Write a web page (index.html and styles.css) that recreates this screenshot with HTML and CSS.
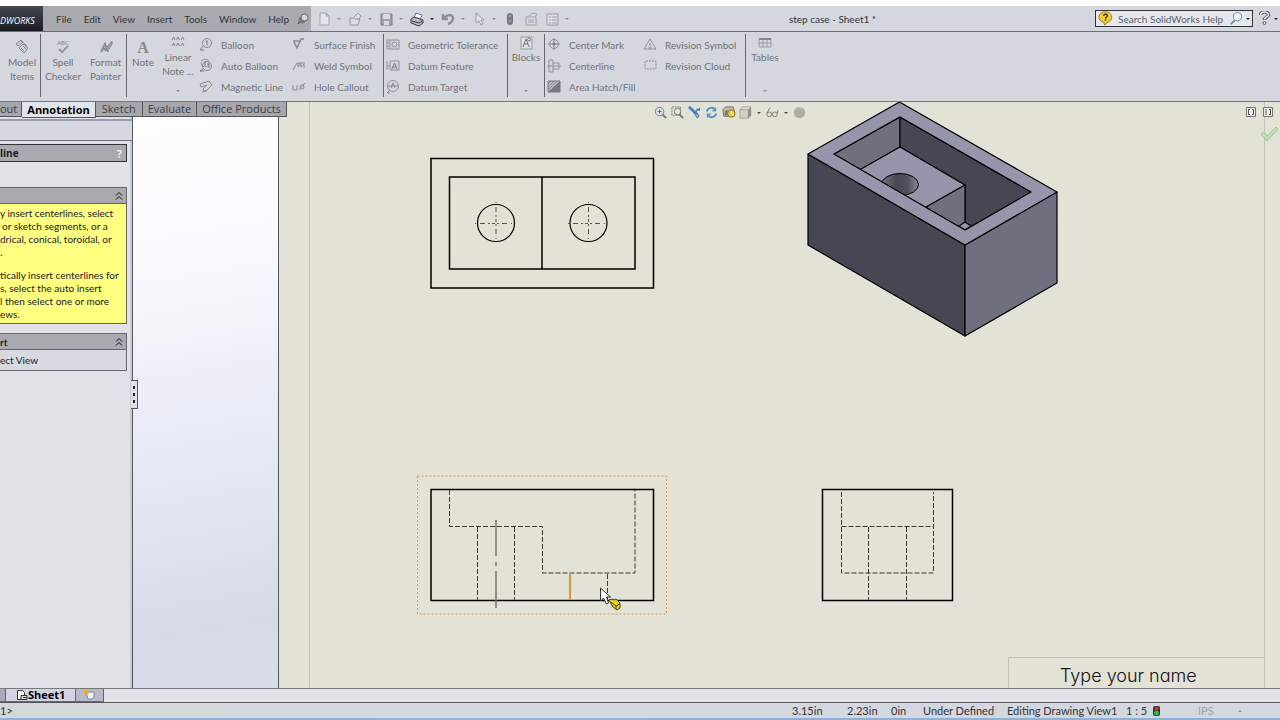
FILE: index.html
```
<!DOCTYPE html>
<html lang="en">
<head>
    <meta charset="UTF-8">
    <meta name="viewport" content="width=device-width, initial-scale=1.0">
    <title>step case - Sheet1</title>
    <link rel="stylesheet" href="styles.css">
</head>
<body>
    <header class="menubar">
        <div class="logo">DWORKS</div>
        <nav class="menus">
            <button>File</button>
            <button>Edit</button>
            <button>View</button>
            <button>Insert</button>
            <button>Tools</button>
            <button>Window</button>
            <button>Help</button>
            <button aria-label="Pin menu"><svg class="icon-pin" viewBox="0 0 12 12"><path d="M1 11l4-5" stroke="#555" stroke-width="1.5"/><circle cx="5" cy="7" r="3.5" fill="#77797e"/><circle cx="7.500" cy="4.500" r="3.500" fill="#d8d9dc" stroke="#66686d"/></svg></button>
        </nav>
        <div class="quick">
            <button class="drop" aria-label="New"><svg viewBox="0 0 16 16"><path d="M4 2h6l3 3v9H4zM10 2v3h3" fill="#e4e6ea" stroke="#a0a2a7"/></svg><i></i></button>
            <button class="drop" aria-label="Open"><svg viewBox="0 0 16 16"><path d="M3 7h4l1 1h5l-2 6H3zM7 6l4-4 3 3-3 4" fill="#dadce0" stroke="#999ba0"/></svg><i></i></button>
            <button class="drop" aria-label="Save"><svg viewBox="0 0 16 16"><path d="M3 3h11v11H3z" fill="#a0a1a5" stroke="#7b7c80"/><path d="M5 3h7v5H5zM6 10h5v4H6z" fill="#d8dade"/></svg><i></i></button>
            <button class="drop on" aria-label="Print"><svg viewBox="0 0 16 16"><path d="M5 7l2-5 6 2-2 5z" fill="#fff" stroke="#4977b5"/><path d="M2 8l3-2 9 3v3l-4 3-8-3z" fill="#b9bbbd" stroke="#35373b"/><path d="M3 10l7 2 3-2" fill="none" stroke="#333"/></svg><i></i></button>
            <button class="drop" aria-label="Undo"><svg viewBox="0 0 16 16"><path d="M3 3v5h5M4 8c2-5 9-5 9-1 0 3-2 5-5 6" fill="none" stroke="#8c8e93" stroke-width="2.500"/></svg><i></i></button>
            <button class="drop" aria-label="Select"><svg viewBox="0 0 16 16"><path d="M5 2v10l3-2 2 4 2-1-2-4h3z" fill="#e0e2e6" stroke="#9a9ca1"/></svg><i></i></button>
            <button aria-label="Rebuild"><svg viewBox="0 0 16 16"><rect x="5" y="2" width="6" height="12" rx="3" fill="#77797d"/><circle cx="8" cy="5" r="1.5" fill="#999"/><circle cx="8" cy="10" r="1.5" fill="#999"/></svg></button>
            <button aria-label="File properties"><svg viewBox="0 0 16 16"><path d="M3 6h10v8H3zM5 9h6M5 11h6M6 5l4-3 4 1-2 3" fill="#d9dbdf" stroke="#a0a2a6"/></svg></button>
            <button class="drop" aria-label="Options"><svg viewBox="0 0 16 16"><path d="M3 3h11v11H3zM5 6h2M8 6h5M5 9h2M8 9h5M5 12h2M8 12h5" fill="#dfe1e5" stroke="#97999e"/></svg><i></i></button>
        </div>
        <div class="doc-title">step case - Sheet1 *</div>
        <div class="search">
            <svg viewBox="0 0 16 16"><path d="M8 1a6 5.500 0 0 1 3 10.500L7 15l-1-3A6 5.500 0 0 1 8 1z" fill="#f3c93c" stroke="#a47c18"/><path d="M6 5c0-2 4-2 4 0 0 1.500-2 1.500-2 3M8 9v1.500" fill="none" stroke="#4b3508" stroke-width="1.500"/></svg>
            <input type="text" aria-label="Search help" placeholder="Search SolidWorks Help">
            <button class="drop on" aria-label="Search"><svg viewBox="0 0 16 16"><circle cx="9" cy="6" r="4.500" fill="#e9f2fb" stroke="#6d83a5"/><path d="M6 10l-4 4" stroke="#7d8494" stroke-width="2"/></svg><i></i></button>
        </div>
        <button class="help drop on" aria-label="Help"><svg viewBox="0 0 16 16"><path d="M4.500 4c0-4 8-4 8 0 0 2-4 2-4 5" fill="none" stroke="#5c5e63" stroke-width="3.500"/><circle cx="8.500" cy="12" r="1.500" fill="#eee" stroke="#5c5e63"/><path d="M4.500 4.500c0-4.500 8-4.500 8-.5 0 2-4 2-4 4.500" fill="none" stroke="#eee" stroke-width="1.500"/></svg><i></i></button>
    </header>

    <section class="ribbon">
        <button class="big split first"><svg viewBox="0 0 16 16"><path d="M2 5l5-4 2 2-5 4zM7 2l6 5M5 9l4-4 5 4-4 5zM7 9l3 3M9 7l3 3" fill="none" stroke="#85878c"/></svg><span>Model Items</span></button>
        <button class="big"><svg viewBox="0 0 16 16"><text x="8" y="6" class="abc">ABC</text><path d="M4 10l3 3 6-6" fill="none" stroke="#999ba0" stroke-width="2"/></svg><span>Spell Checker</span></button>
        <button class="big split"><svg viewBox="0 0 16 16"><path d="M3 13l4-8 3 8M4 10h5" fill="none" stroke="#8a8c91" stroke-width="2"/><path d="M14 2l-5 6-2 4 4-2 3-5z" fill="#a6a8ad" stroke="#85878c"/></svg><span>Format Painter</span></button>
        <button class="big"><svg viewBox="0 0 16 16"><text x="8" y="14" class="letter">A</text></svg><span>Note</span></button>
        <button class="big tight"><svg viewBox="0 0 16 16"><path d="M2 6l1.500-3L5 6M6.500 6L8 3l1.500 3M11 6l1.500-3L14 6M2 12l1.500-3L5 12M6.500 12L8 9l1.500 3M11 12l1.500-3L14 12" fill="none" stroke="#85878c"/></svg><span>Linear Note ...</span><i></i></button>
        <div class="stack">
            <button><svg viewBox="0 0 16 16"><circle cx="9" cy="6" r="4.500" fill="none" stroke="#888a8f"/><path d="M9 3.500v5M7.500 5L9 3.500M5 9l-3 4h4" fill="none" stroke="#777"/></svg>Balloon</button>
            <button><svg viewBox="0 0 16 16"><circle cx="7" cy="5" r="4" fill="none" stroke="#9a9ca1"/><circle cx="9" cy="8" r="4.500" fill="none" stroke="#888a8f"/><path d="M7 3v5M9 6h2v4M5 11l-3 2h4" fill="none" stroke="#777"/></svg>Auto Balloon</button>
            <button><svg viewBox="0 0 16 16"><path d="M2 5l9-3 3 4-7 7-2-3 4-4-6 2zM9 11l-5 2" fill="none" stroke="#8a8c91"/></svg>Magnetic Line</button>
        </div>
        <div class="stack split">
            <button><svg viewBox="0 0 16 16"><path d="M2 4h7M3 5l3 6 4-9h3" fill="none" stroke="#888a8f" stroke-width="1.500"/></svg>Surface Finish</button>
            <button><svg viewBox="0 0 16 16"><path d="M2 12l4-7h8M7 5v4l3-4v4l3-3v4" fill="none" stroke="#888a8f"/></svg>Weld Symbol</button>
            <button><svg viewBox="0 0 16 16"><path d="M2 6v5h4V6M8 11l6-7" fill="none" stroke="#888a8f"/><circle cx="11" cy="8" r="2" fill="none" stroke="#888a8f"/></svg>Hole Callout</button>
        </div>
        <div class="stack split">
            <button><svg viewBox="0 0 16 16"><path d="M2 3h12v9H2zM5 3v9M2 6h3M2 9h3" fill="none" stroke="#909297"/><circle cx="9.500" cy="7.500" r="2.500" fill="none" stroke="#85878c"/></svg>Geometric Tolerance</button>
            <button><svg viewBox="0 0 16 16"><path d="M5 3h9v9H5zM2 3v9M2 8h3" fill="none" stroke="#909297"/><path d="M7 11l2.500-6L12 11M8 9h3" fill="none" stroke="#777"/></svg>Datum Feature</button>
            <button><svg viewBox="0 0 16 16"><circle cx="8" cy="7" r="5.500" fill="none" stroke="#909297"/><path d="M3 7h10M6 9l2-5 2 5M5 11l-3 3h3" fill="none" stroke="#85878c"/></svg>Datum Target</button>
        </div>
        <button class="big split tight"><svg viewBox="0 0 16 16"><path d="M3 3h11v12H3z" fill="#dfe1e5" stroke="#999ba0"/><path d="M5 13l3-8 3 8M6 10h4" fill="none" stroke="#777"/><circle cx="11" cy="5.500" r="1.500" fill="none" stroke="#777"/></svg><span>Blocks</span><i></i></button>
        <div class="stack">
            <button><svg viewBox="0 0 16 16"><circle cx="8" cy="7" r="4.500" fill="none" stroke="#888a8f"/><path d="M8 1v12M2 7h12" stroke="#888a8f"/><circle cx="8" cy="7" r="1.500" fill="#777"/></svg>Center Mark</button>
            <button><svg viewBox="0 0 16 16"><path d="M3 2h4v12H3zM7 5h6v6H7M1 8h14" fill="none" stroke="#909297"/></svg>Centerline</button>
            <button><svg viewBox="0 0 16 16"><path d="M2 2h12v11H2z" fill="#bbbdc2" stroke="#77797e"/><path d="M14 2v11H2z" fill="#77797e"/><path d="M2 8l6-6M2 11l9-9M2 5l3-3" stroke="#85878c"/></svg>Area Hatch/Fill</button>
        </div>
        <div class="stack split">
            <button><svg viewBox="0 0 16 16"><path d="M8 2l6 10H2zM8 6v5M7 7h1M6.500 11h3" fill="none" stroke="#909297"/></svg>Revision Symbol</button>
            <button><svg viewBox="0 0 16 16"><rect x="3" y="3" width="11" height="8" rx="1" fill="none" stroke="#85878c" stroke-dasharray="2 1"/></svg>Revision Cloud</button>
        </div>
        <button class="big tight"><svg viewBox="0 0 16 16"><path d="M2 5h12v8H2zM2 9h12M6 5v8M10 5v8" fill="none" stroke="#999ba0"/><path d="M2 5h12" stroke="#85878c" stroke-width="2"/></svg><span>Tables</span><i></i></button>
    </section>

    <main class="workspace">
        <nav class="tabs">
            <button>out</button>
            <button class="active">Annotation</button>
            <button>Sketch</button>
            <button>Evaluate</button>
            <button>Office Products</button>
        </nav>

        <aside class="manager">
            <div class="manager-top"></div>
            <h2 class="manager-title">line <span>?</span></h2>
            <section class="panel">
                <button class="panel-head" aria-label="Collapse message"><span></span><svg viewBox="0 0 8 10"><path d="M1 4.500l3-3 3 3M1 8.500l3-3 3 3" fill="none" stroke="#111"/></svg></button>
                <div class="message">
                    <p>y insert centerlines, select<br><span class="in">or sketch segments, or a</span><br>drical, conical, toroidal, or<br>.</p>
                    <p>tically insert centerlines for<br>s, select the auto insert<br>l then select one or more<br>ews.</p>
                </div>
            </section>
            <section class="panel">
                <button class="panel-head"><span>rt</span><svg viewBox="0 0 8 10"><path d="M1 4.500l3-3 3 3M1 8.500l3-3 3 3" fill="none" stroke="#111"/></svg></button>
                <div class="panel-row">ect View</div>
            </section>
            <button class="handle" aria-label="Hide panel"><b></b><b></b><b></b></button>
        </aside>

        <div class="backdrop"></div>

        <div class="sheet">
            <svg class="drawing" viewBox="279 102 1001 586" preserveAspectRatio="xMinYMin slice">
                <defs>
                    <linearGradient id="hole">
                        <stop offset="0" stop-color="#77788a"/>
                        <stop offset="0.4" stop-color="#464750"/>
                        <stop offset="0.7" stop-color="#50515c"/>
                        <stop offset="1" stop-color="#8a8b9d"/>
                    </linearGradient>
                    <clipPath id="pocket"><path d="M900 117l131 75-66 38-131-76z"/></clipPath>
                </defs>

                <!-- sheet border and title block -->
                <path class="frame" d="M309.500 102v586M1264.500 102v586M1008.500 688v-30.500h256"/>
                <text class="name" x="1060" y="682">Type your name</text>

                <!-- top view -->
                <path class="edge" d="M431 158.500h222.500v129.500H431zM449.500 177h185.500v92H449.500zM542 177v92"/>
                <circle class="edge thin" cx="496" cy="223" r="18.500"/>
                <circle class="edge thin" cx="588.500" cy="223" r="18.500"/>
                <path class="mark" d="M475 223.500h41M496 202v41M568 223.500h41M588.500 202v41"/>

                <!-- front view -->
                <rect class="selected" x="417.500" y="476" width="249" height="138"/>
                <path class="edge" d="M431 489.500h222.500v111H431z"/>
                <path class="hidden" d="M449.500 490v36.500h93V573h92.500v-83M477.500 527v73M514.500 527v73M607.500 574v26"/>
                <path class="axis" d="M496 520v36M496 562v4M496 571v37"/>
                <path class="picked" d="M570 573v27"/>

                <!-- side view -->
                <path class="edge" d="M822.500 489.500h130v111h-130z"/>
                <path class="hidden" d="M841.500 492v81h92v-81M841.500 526.500h92M868.500 527v73M906.500 527v73"/>

                <!-- isometric view -->
                <path class="solid dark" d="M808 154l157 91v91l-157-91z"/>
                <path class="solid mid" d="M965 245l92-53v91l-92 53z"/>
                <path class="solid light" d="M899.500 102L1057 192l-92 53-157-91z"/>
                <g clip-path="url(#pocket)">
                    <path class="solid mid" d="M900 117v30l-66 38v-31z"/>
                    <path class="solid dark" d="M900 117l131 75-66 45v-52l-65-38z"/>
                    <path class="solid light" d="M900 147l65 38-66 38-66-38z"/>
                    <ellipse cx="900" cy="184.500" rx="18.500" ry="11" fill="url(#hole)" stroke="#000"/>
                    <path class="solid mid" d="M965 185v52l-39-30z"/>
                    <path class="solid light" d="M965 222l6 4-6 4-6-4z"/>
                </g>
                <path class="edge thin" d="M900 117l131 75-66 38-131-76z"/>

                <!-- pointer -->
                <path d="M600.500 588v13l3-3 3 6 2-1-2-6h4z" fill="#fff" stroke="#333"/>
                <path d="M609 600l3-1 2 1 2-1 4 4v5l-3 2-4-3z" fill="#e8d02c" stroke="#4c430c"/>
                <path d="M611 602l5 4 4-2M616 606v3" fill="none" stroke="#4c430c"/>
            </svg>

            <div class="view-tools">
                <button aria-label="Zoom to fit"><svg viewBox="0 0 16 16"><circle cx="7" cy="7" r="4.500" fill="#dbe3ea" stroke="#777"/><path d="M5 7h4M7 5v4" stroke="#555"/><path d="M10 10l4 4" stroke="#777" stroke-width="2"/></svg></button>
                <button aria-label="Zoom to area"><svg viewBox="0 0 16 16"><path d="M2 2h9v9H2z" fill="none" stroke="#777" stroke-dasharray="2 1"/><circle cx="8" cy="7" r="3.500" fill="#dbe3ea" stroke="#777"/><path d="M10 10l4 4" stroke="#777" stroke-width="2"/></svg></button>
                <button aria-label="Previous view"><svg viewBox="0 0 16 16"><path d="M2 2l9 8" stroke="#4b87bd" stroke-width="3"/><path d="M14 3l-5 5M7 8l4 6 2-3z" stroke="#3c76ad" fill="#8ec1e6"/><path d="M10 5h4" stroke="#3c76ad" stroke-width="2"/></svg></button>
                <button aria-label="Rebuild view"><svg viewBox="0 0 16 16"><path d="M3 7c1-5 7-5 9-2M13 9c-1 5-7 5-9 2" fill="none" stroke="#5b94c8" stroke-width="2"/><path d="M13 2v5H8zM3 14V9h5z" fill="#5b94c8"/></svg></button>
                <button aria-label="3D drawing view"><svg viewBox="0 0 16 16"><path d="M2 5l3-3h8l1 4v6H3z" fill="#b9bbb5" stroke="#6e6f6b"/><path d="M4 6h4v5H4z" fill="#777"/><circle cx="11" cy="9" r="4" fill="#f0c53a" stroke="#8d701b"/><path d="M11 6v3l3 2" fill="none" stroke="#fff"/></svg></button>
                <button aria-label="Display style"><svg viewBox="0 0 16 16"><path d="M2 5l3-3h9l-3 3z" fill="#e0e0d8" stroke="#a4a49c"/><path d="M2 5h9v9H2z" fill="#cfcfc7" stroke="#a4a49c"/><path d="M11 5l3-3v9l-3 3z" fill="#8d8d86"/></svg></button>
                <i></i>
                <button aria-label="Hide items"><svg viewBox="0 0 16 16"><circle cx="4.500" cy="10" r="2.500" fill="none" stroke="#777"/><circle cx="10.500" cy="10" r="2.500" fill="none" stroke="#777"/><path d="M2 9l3-6M13 9l1-4M7 9h1" fill="none" stroke="#777"/></svg></button>
                <i></i>
                <button aria-label="Appearance"><svg viewBox="0 0 16 16"><circle cx="8" cy="8" r="6" fill="#aeada3"/><path d="M4 6a4 4 0 0 1 6-2" fill="none" stroke="#c3c2b8"/></svg></button>
            </div>
            <div class="corner">
                <div>
                    <button aria-label="Previous pane"><svg viewBox="0 0 12 12"><path d="M1.500 1.500h9v9h-9z" fill="#eee" stroke="#77776f"/><path d="M5 3.500H3.500v5H5M7 3.500h1.500v5H7" fill="none" stroke="#555"/></svg></button>
                    <button aria-label="Next pane"><svg viewBox="0 0 12 12"><path d="M1.500 1.500h9v9h-9z" fill="#eee" stroke="#77776f"/><path d="M7 3.500h1.500v5H7M4 3v6" fill="none" stroke="#555"/></svg></button>
                </div>
                <button aria-label="Confirm"><svg class="check" viewBox="0 0 18 16"><path d="M1 8l3-2 3 4 9-9 2 2L7 15z" fill="#c2dfb5" stroke="#a3c796"/></svg></button>
            </div>
        </div>
    </main>

    <nav class="sheet-tabs">
        <button class="edge-tab" aria-label="Previous sheet"></button>
        <button class="current"><svg viewBox="0 0 12 12"><path d="M1.500 1.500h5l2 2v7h-7z" fill="#fff" stroke="#333"/><path d="M5 6.500h6v4H5zM7 8.500h4" fill="#ddd" stroke="#333"/></svg>Sheet1</button>
        <button class="add" aria-label="Add sheet"><svg viewBox="0 0 12 12"><path d="M3 3h8v5l-2 2H5z" fill="#eef1f6" stroke="#7f8796"/><circle cx="3" cy="3" r="2.500" fill="#f2a62d"/></svg></button>
    </nav>

    <footer class="status">
        <span class="hint">1&gt;</span>
        <span class="x">3.15in</span>
        <span class="y">2.23in</span>
        <span class="z">0in</span>
        <span class="state">Under Defined</span>
        <span class="mode">Editing Drawing View1</span>
        <span class="scale">1 : 5</span>
        <svg viewBox="0 0 8 12"><rect x="0" y="1" width="7" height="10" rx="2" fill="#333"/><circle cx="3.500" cy="3.500" r="2" fill="#d5301f"/><circle cx="3.500" cy="8" r="2.500" fill="#2fbd3b"/></svg>
        <button class="units">IPS<i></i></button>
    </footer>
</body>
</html>
```
FILE: styles.css
```
* {
    box-sizing: border-box;
}
body {
    margin: 0;
    height: 100vh;
    display: flex;
    flex-direction: column;
    overflow: hidden;
    border-top: 6px solid #fff;
    background: #d4d7dd;
    color: #333438;
    font-family: Lato, "Open Sans", sans-serif;
    font-size: 10px;
    line-height: 14px;
}
button, input {
    margin: 0;
    padding: 0;
    border: 0;
    background: none;
    color: inherit;
    font: inherit;
}
svg {
    display: block;
    flex: none;
    width: 16px;
    height: 16px;
}
/* small drop-down arrow */
i {
    width: 0;
    height: 0;
    border: 2px solid transparent;
    border-top-color: #8d8f94;
    border-bottom: 0;
}

/* menu bar */
.menubar {
    flex: none;
    display: flex;
    align-items: center;
    height: 26px;
    border-bottom: 1px solid #6d6e73;
}
.logo {
    width: 43px;
    height: 25px;
    padding-top: 8px;
    background: linear-gradient(#434750, #191c22);
    color: #fff;
    font-family: "Open Sans", sans-serif;
    font-size: 9px;
    font-style: italic;
    white-space: nowrap;
}
.menus {
    display: flex;
    align-items: center;
    gap: 12px;
    width: 268px;
    height: 25px;
    padding-left: 13px;
    background: #a9aaaf;
    white-space: nowrap;
}
.icon-pin {
    width: 12px;
    height: 12px;
}
.menus button:last-child {
    margin-left: -4px;
}
.quick {
    display: flex;
    align-items: center;
    gap: 5px;
    padding-left: 5px;
}
.drop {
    display: flex;
    align-items: center;
    gap: 5px;
}
.quick .drop {
    width: 26px;
}
.on i {
    border-top-color: #222;
}
.doc-title {
    flex: 1;
    text-align: center;
}
.search {
    display: flex;
    align-items: center;
    gap: 5px;
    width: 158px;
    height: 17px;
    padding: 0 2px;
    border: 1px solid #333;
    background: #e4e7ee;
}
.search svg {
    width: 15px;
    height: 15px;
}
.search input {
    flex: 1;
    min-width: 0;
    outline: 0;
}
.search input::placeholder {
    color: #5c5e66;
    opacity: 1;
}
.search .drop {
    gap: 2px;
    margin-left: -4px;
}
.help {
    width: 27px;
    padding-left: 3px;
    gap: 2px;
}

/* ribbon */
.ribbon {
    flex: none;
    display: grid;
    grid-template-columns: 41px 44px 42px 32px 38px 93px 94px 124px 37px 96px 105px 38px;
    height: 70px;
    padding: 2px 0 4px;
    border-bottom: 1px solid #77787a;
    background: #d4d7dd;
    color: #707278;
}
.split {
    border-right: 1px solid #66686d;
}
.big {
    display: flex;
    flex-direction: column;
    align-items: center;
    gap: 0;
    padding-top: 5px;
}
.big.first {
    padding-left: 4px;
}
.big.tight {
    padding-top: 0;
}
.big i {
    margin: auto 0 5px;
}
.abc {
    font-size: 6px;
    text-anchor: middle;
    fill: #85878c;
}
.letter {
    font: bold 16px "Liberation Serif", serif;
    text-anchor: middle;
    fill: #85878c;
}
.stack {
    display: grid;
    grid-template-rows: repeat(3, 1fr);
    padding-left: 1px;
}
.stack button {
    display: flex;
    align-items: center;
    gap: 7px;
    white-space: nowrap;
}

/* workspace */
.workspace {
    position: relative;
    flex: 1;
    display: flex;
    min-height: 0;
}
.tabs {
    position: absolute;
    top: 0;
    left: 0;
    z-index: 2;
    display: flex;
    align-items: flex-start;
}
.tabs button {
    height: 15px;
    padding: 0 5px;
    border: solid #55565b;
    border-width: 0 1px 1px 0;
    background: #a6a7ac;
    color: #3d3e43;
    font-family: "Open Sans", sans-serif;
    font-size: 11px;
    line-height: 14px;
}
.tabs button:first-child {
    padding: 0 4px 0 0;
}
.tabs .active {
    height: 16px;
    background: #e2e4ea;
    color: #000;
    font-weight: bold;
}
.tabs .active + button {
    padding: 0 6px;
}
.manager {
    position: relative;
    flex: none;
    display: flex;
    flex-direction: column;
    width: 133px;
    padding: 17px 5px 0 0;
    border-right: 1px solid #55565b;
    background: #dfe2e7;
    box-shadow: inset -2px 0 #c9ccd2;
    color: #222;
}
.manager-top {
    height: 22px;
    margin-right: -5px;
    border-top: 2px solid #9c9bae;
    border-bottom: 1px solid #6d6e73;
    background: #d4d7dd;
}
.manager-title {
    display: flex;
    justify-content: space-between;
    height: 18px;
    margin: 3px 0 25px;
    padding-right: 4px;
    border: solid #333;
    border-width: 1px 1px 1px 0;
    background: #a9aaaf;
    font-family: "Open Sans", sans-serif;
    font-size: 10px;
    line-height: 17px;
}
.manager-title span {
    color: #eee;
    font-size: 11px;
}
.panel {
    margin-bottom: 9px;
    border: solid #66676c;
    border-width: 1px 1px 1px 0;
}
.panel-head {
    display: flex;
    align-items: center;
    justify-content: space-between;
    width: 100%;
    height: 16px;
    padding-right: 3px;
    border-bottom: 1px solid #66676c;
    background: #a9aaaf;
    font-weight: bold;
}
.panel-head svg {
    width: 8px;
    height: 10px;
}
.message {
    padding: 3px 0 2px;
    background: #ffff80;
    line-height: 13px;
    white-space: nowrap;
}
.message p {
    margin: 0;
}
.message p + p {
    margin-top: 10px;
}
.in {
    padding-left: 2px;
}
.panel-row {
    height: 20px;
    background: #d7dae0;
    line-height: 20px;
}
.handle {
    position: absolute;
    top: 278px;
    right: -6px;
    z-index: 1;
    display: flex;
    flex-direction: column;
    align-items: center;
    justify-content: center;
    gap: 4px;
    width: 7px;
    height: 29px;
    border: 1px solid #55565b;
    border-left: 0;
    background: #dfe2e7;
}
.handle b {
    width: 2px;
    height: 3px;
    background: #222;
}
.backdrop {
    flex: none;
    width: 145px;
    background: linear-gradient(170deg, #fdfdfd 0%, #fbfbfd 25%, #eceff8 48%, #dfe4ef 72%, #d6dae7 88%, #d9dce9 100%);
}
.sheet {
    position: relative;
    flex: 1;
    min-width: 0;
    border-left: 1px solid #55565b;
    background: #e2e2d7;
}
.drawing {
    width: 100%;
    height: 100%;
}
.frame {
    fill: none;
    stroke: #c2c3b8;
}
.name {
    font-family: Inter, sans-serif;
    font-size: 18px;
    font-weight: 300;
    font-feature-settings: "cv11";
    fill: #111;
}
.edge {
    fill: none;
    stroke: #000;
    stroke-width: 1.5;
}
.thin {
    stroke-width: 1.2;
}
.mark {
    fill: none;
    stroke: #55554f;
    stroke-dasharray: 1 4 5 3 2 2 3 2 2 3 5 4;
}
.hidden {
    fill: none;
    stroke: #3a3a36;
    stroke-dasharray: 5 2;
}
.axis {
    stroke: #77776f;
    stroke-width: 1.5;
}
.selected {
    fill: none;
    stroke: #e2974a;
    stroke-dasharray: 2 2;
}
.picked {
    stroke: #e0913c;
    stroke-width: 2;
}
.solid {
    stroke: #000;
    stroke-width: 1.2;
    stroke-linejoin: round;
}
.dark {
    fill: #464752;
}
.mid {
    fill: #6e7080;
}
.light {
    fill: #9595ab;
}
.view-tools {
    position: absolute;
    top: 3px;
    left: 374px;
    display: flex;
    align-items: center;
    gap: 2px;
}
.view-tools svg {
    width: 15px;
    height: 15px;
}
.view-tools i {
    margin: 0 2px;
    border-top-color: #444;
}
.corner {
    position: absolute;
    top: 4px;
    right: 2px;
}
.corner div {
    display: flex;
    gap: 5px;
    margin: 0 4px 8px 0;
}
.corner div svg {
    width: 12px;
    height: 12px;
}
.corner > button {
    display: block;
    margin-left: auto;
}
.check {
    width: 18px;
    height: 16px;
}

/* sheet tabs */
.sheet-tabs {
    flex: none;
    display: flex;
    align-items: flex-start;
    height: 15px;
    border-top: 1px solid #77787a;
    border-bottom: 1px solid #55565b;
    background: #dfe2e7;
}
.sheet-tabs button {
    height: 13px;
    border: solid #66676c;
    border-width: 0 1px 1px 0;
}
.edge-tab {
    width: 6px;
    background: #a9aabc;
}
.sheet-tabs .current {
    display: flex;
    align-items: center;
    width: 70px;
    padding-left: 10px;
    background: #d3d4e2;
    color: #000;
    font-family: "Open Sans", sans-serif;
    font-size: 11px;
    font-weight: bold;
}
.sheet-tabs svg {
    width: 12px;
    height: 12px;
}
.add {
    width: 28px;
    padding-left: 7px;
    background: #b9bac9;
}

/* status bar */
.status {
    flex: none;
    display: flex;
    align-items: center;
    height: 17px;
    border-bottom: 2px solid #8fb0d8;
    background: linear-gradient(90deg, #d5d8da, #d4d7df);
    font-size: 11px;
    white-space: nowrap;
}
.hint {
    flex: 1;
}
.x {
    width: 55px;
}
.y {
    width: 44px;
}
.z {
    width: 32px;
}
.state {
    width: 84px;
}
.mode {
    width: 119px;
}
.scale {
    width: 27px;
}
.status svg {
    width: 8px;
    height: 12px;
}
.units {
    display: flex;
    align-items: center;
    gap: 24px;
    width: 119px;
    padding-left: 37px;
    color: #a2a5ab;
}
.units i {
    border-top: 0;
    border-bottom: 2px solid #8d8f94;
}
```
